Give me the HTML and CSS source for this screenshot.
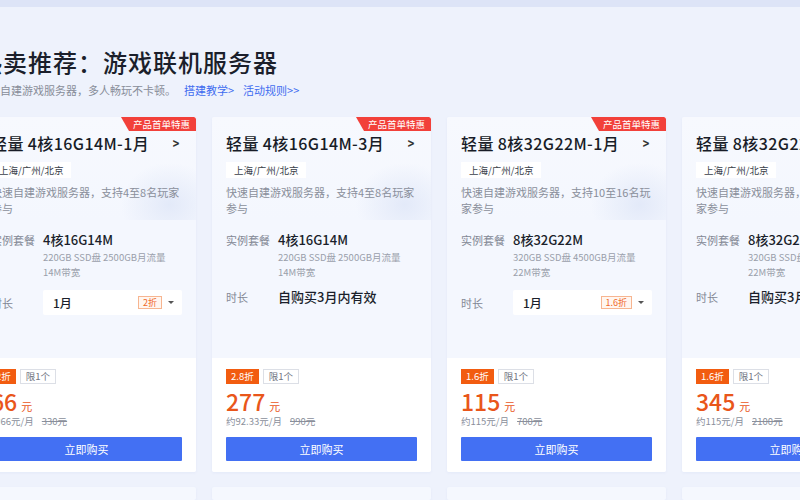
FILE: index.html
```html
<!DOCTYPE html>
<html lang="zh-CN">
<head>
<meta charset="utf-8">
<link rel="stylesheet" href="styles.css">
</head>
<body>
<div class="topband"></div>
<div class="page">
  <h1 class="title">热卖推荐：游戏联机服务器</h1>
  <p class="subtitle">快速自建游戏服务器，多人畅玩不卡顿。<a class="link first">搭建教学&gt;</a><a class="link">活动规则&gt;&gt;</a></p>

  <div class="cards">
    <div class="card">
      <span class="ribbon">产品首单特惠</span>
      <div class="head">
        <div class="name-row"><span class="name">轻量 4核16G14M-1月</span><span class="chev">&gt;</span></div>
        <span class="region">上海/广州/北京</span>
        <p class="desc">快速自建游戏服务器，支持4至8名玩家参与</p>
      </div>
      <div class="specs">
        <div class="spec">
          <span class="label">实例套餐</span>
          <div class="val"><div class="val-main">4核16G14M</div><div class="val-sub">220GB SSD盘 2500GB月流量 14M带宽</div></div>
        </div>
        <div class="spec spec-time">
          <span class="label">时长</span>
          <div class="select"><span class="sel-text">1月</span><span class="sel-badge">2折</span><span class="caret"></span></div>
        </div>
      </div>
      <div class="foot">
        <div class="tags"><span class="tag-off">2折</span><span class="tag-lim">限1个</span></div>
        <div class="price"><span class="num">66</span><span class="unit">元</span></div>
        <div class="per">约66元/月<s>330元</s></div>
        <button class="buy">立即购买</button>
      </div>
    </div>

    <div class="card">
      <span class="ribbon">产品首单特惠</span>
      <div class="head">
        <div class="name-row"><span class="name">轻量 4核16G14M-3月</span><span class="chev">&gt;</span></div>
        <span class="region">上海/广州/北京</span>
        <p class="desc">快速自建游戏服务器，支持4至8名玩家参与</p>
      </div>
      <div class="specs">
        <div class="spec">
          <span class="label">实例套餐</span>
          <div class="val"><div class="val-main">4核16G14M</div><div class="val-sub">220GB SSD盘 2500GB月流量 14M带宽</div></div>
        </div>
        <div class="spec">
          <span class="label">时长</span>
          <div class="val"><div class="val-main">自购买3月内有效</div></div>
        </div>
      </div>
      <div class="foot">
        <div class="tags"><span class="tag-off">2.8折</span><span class="tag-lim">限1个</span></div>
        <div class="price"><span class="num">277</span><span class="unit">元</span></div>
        <div class="per">约92.33元/月<s>990元</s></div>
        <button class="buy">立即购买</button>
      </div>
    </div>

    <div class="card">
      <span class="ribbon">产品首单特惠</span>
      <div class="head">
        <div class="name-row"><span class="name">轻量 8核32G22M-1月</span><span class="chev">&gt;</span></div>
        <span class="region">上海/广州/北京</span>
        <p class="desc">快速自建游戏服务器，支持10至16名玩家参与</p>
      </div>
      <div class="specs">
        <div class="spec">
          <span class="label">实例套餐</span>
          <div class="val"><div class="val-main">8核32G22M</div><div class="val-sub">320GB SSD盘 4500GB月流量 22M带宽</div></div>
        </div>
        <div class="spec spec-time">
          <span class="label">时长</span>
          <div class="select"><span class="sel-text">1月</span><span class="sel-badge">1.6折</span><span class="caret"></span></div>
        </div>
      </div>
      <div class="foot">
        <div class="tags"><span class="tag-off">1.6折</span><span class="tag-lim">限1个</span></div>
        <div class="price"><span class="num">115</span><span class="unit">元</span></div>
        <div class="per">约115元/月<s>700元</s></div>
        <button class="buy">立即购买</button>
      </div>
    </div>

    <div class="card">
      <div class="head">
        <div class="name-row"><span class="name">轻量 8核32G22M-3月</span><span class="chev">&gt;</span></div>
        <span class="region">上海/广州/北京</span>
        <p class="desc">快速自建游戏服务器，支持10至16名玩家参与</p>
      </div>
      <div class="specs">
        <div class="spec">
          <span class="label">实例套餐</span>
          <div class="val"><div class="val-main">8核32G22M</div><div class="val-sub">320GB SSD盘 4500GB月流量 22M带宽</div></div>
        </div>
        <div class="spec">
          <span class="label">时长</span>
          <div class="val"><div class="val-main">自购买3月内有效</div></div>
        </div>
      </div>
      <div class="foot">
        <div class="tags"><span class="tag-off">1.6折</span><span class="tag-lim">限1个</span></div>
        <div class="price"><span class="num">345</span><span class="unit">元</span></div>
        <div class="per">约115元/月<s>2100元</s></div>
        <button class="buy">立即购买</button>
      </div>
    </div>
  </div>

  <div class="cards row2">
    <div class="card stub"></div>
    <div class="card stub"></div>
    <div class="card stub"></div>
    <div class="card stub"></div>
  </div>
</div>
</body>
</html>
```

FILE: styles.css
```css
* { box-sizing: border-box; }
html, body {
  margin: 0;
  padding: 0;
  background: #eef2fc;
  font-family: "Noto Sans CJK SC", "Noto Sans", sans-serif;
  color: #1f2330;
  overflow: hidden;
  width: 800px;
  height: 500px;
}
.topband {
  height: 7px;
  background: #dde4f7;
}
.page {
  margin-left: -23px;
  padding-top: 38px;
}
.title {
  margin: 0 0 0 1px;
  font-size: 24px;
  line-height: 34px;
  font-weight: 500;
  letter-spacing: 1px;
  color: #1b1f2b;
}
.subtitle {
  margin: 3px 0 0 1px;
  font-size: 11px;
  line-height: 16px;
  color: #888d99;
}
.link {
  color: #3f6cf0;
  margin-left: 9px;
}
.link.first { margin-left: 8px; }

.cards {
  display: flex;
  gap: 16px;
  margin-top: 19px;
}
.card {
  position: relative;
  flex: 0 0 219px;
  width: 219px;
  height: 355px;
  background: #f4f7fe;
  border-radius: 2px;
  display: flex;
  flex-direction: column;
  overflow: hidden;
  box-shadow: 0 1px 3px rgba(120,140,200,0.08);
}
.ribbon {
  position: absolute;
  top: 0;
  right: 0;
  height: 14px;
  padding: 0 6px 0 12px;
  background: #f2403a;
  color: #fff;
  font-size: 9.5px;
  line-height: 14px;
  clip-path: polygon(0 0, 100% 0, 100% 100%, 8px 100%);
  border-top-right-radius: 2px;
}
.head {
  padding: 14px 14px 0 14px;
  height: 103px;
  background:
    radial-gradient(ellipse 70px 60px at 88% 85%, rgba(225,232,248,0.9), rgba(225,232,248,0) 70%),
    linear-gradient(180deg, #f7f9fe 0%, #f4f7fe 100%);
}
.name-row {
  display: flex;
  justify-content: space-between;
  align-items: center;
  height: 24px;
}
.name {
  font-size: 16px;
  font-weight: 500;
  color: #181c27;
  letter-spacing: 0.4px;
}
.chev {
  font-size: 14px;
  font-weight: 700;
  color: #333;
  margin-right: 2px;
  transform: scaleX(0.8);
}
.region {
  display: inline-block;
  margin-top: 0;
  height: 16px;
  padding: 0 8px;
  background: #ffffff;
  font-size: 9.5px;
  line-height: 16px;
  color: #3a3f4b;
}
.desc {
  margin: 5px 0 0 0;
  font-size: 11px;
  line-height: 16px;
  color: #8a8f9b;
  width: 192px;
}
.specs {
  padding: 11px 14px 0 14px;
  flex: 0 0 138px;
}
.spec {
  display: flex;
  align-items: flex-start;
}
.label {
  flex: 0 0 52px;
  font-size: 11px;
  line-height: 16px;
  color: #838895;
  padding-top: 1px;
}
.val { width: 139px; }
.val-main {
  font-size: 13px;
  line-height: 18px;
  font-weight: 500;
  color: #1b1f2b;
}
.val-sub {
  margin-top: 1px;
  font-size: 9.5px;
  line-height: 15px;
  color: #9a9fab;
}
.spec + .spec { margin-top: 8px; }
.spec-time { align-items: center; margin-top: 10px !important; }
.select {
  flex: 1;
  height: 25px;
  background: #fff;
  display: flex;
  align-items: center;
  padding: 0 8px 0 10px;
  border-radius: 2px;
}
.sel-text {
  font-size: 12px;
  font-weight: 500;
  color: #1b1f2b;
  flex: 1;
}
.sel-badge {
  font-size: 9px;
  line-height: 11px;
  color: #f06a2a;
  border: 1px solid #f7b590;
  background: #fff6f0;
  padding: 0 4px;
}
.caret {
  margin-left: 6px;
  width: 0;
  height: 0;
  border-left: 3px solid transparent;
  border-right: 3px solid transparent;
  border-top: 3px solid #555;
}
.foot {
  flex: 1;
  background: #ffffff;
  padding: 11px 14px 0 14px;
}
.tags { display: flex; gap: 4px; height: 15px; }
.tag-off {
  background: #f25c10;
  color: #fff;
  font-size: 9.5px;
  line-height: 15px;
  padding: 0 5px;
}
.tag-lim {
  border: 1px solid #dcdfe6;
  color: #6f7480;
  font-size: 9.5px;
  line-height: 13px;
  padding: 0 5px;
}
.price {
  margin-top: 5px;
  height: 24px;
  display: flex;
  align-items: baseline;
  color: #e9561a;
}
.num {
  font-size: 23px;
  line-height: 24px;
  font-weight: 500;
}
.unit {
  font-size: 11px;
  line-height: 14px;
  margin-left: 4px;
}
.per {
  margin-top: 2px;
  font-size: 9.5px;
  line-height: 13px;
  color: #8a8f9b;
}
.per s { margin-left: 8px; color: #8a8f9b; }
.buy {
  display: block;
  margin-top: 9px;
  width: 191px;
  height: 24px;
  border: 0;
  border-radius: 1px;
  background: #4370f3;
  color: #fff;
  font-family: "Noto Sans CJK SC", sans-serif;
  font-size: 11px;
  padding: 0;
}
.row2 { margin-top: 15px; }
.stub { height: 13px; background: #f5f8fe; }
```
